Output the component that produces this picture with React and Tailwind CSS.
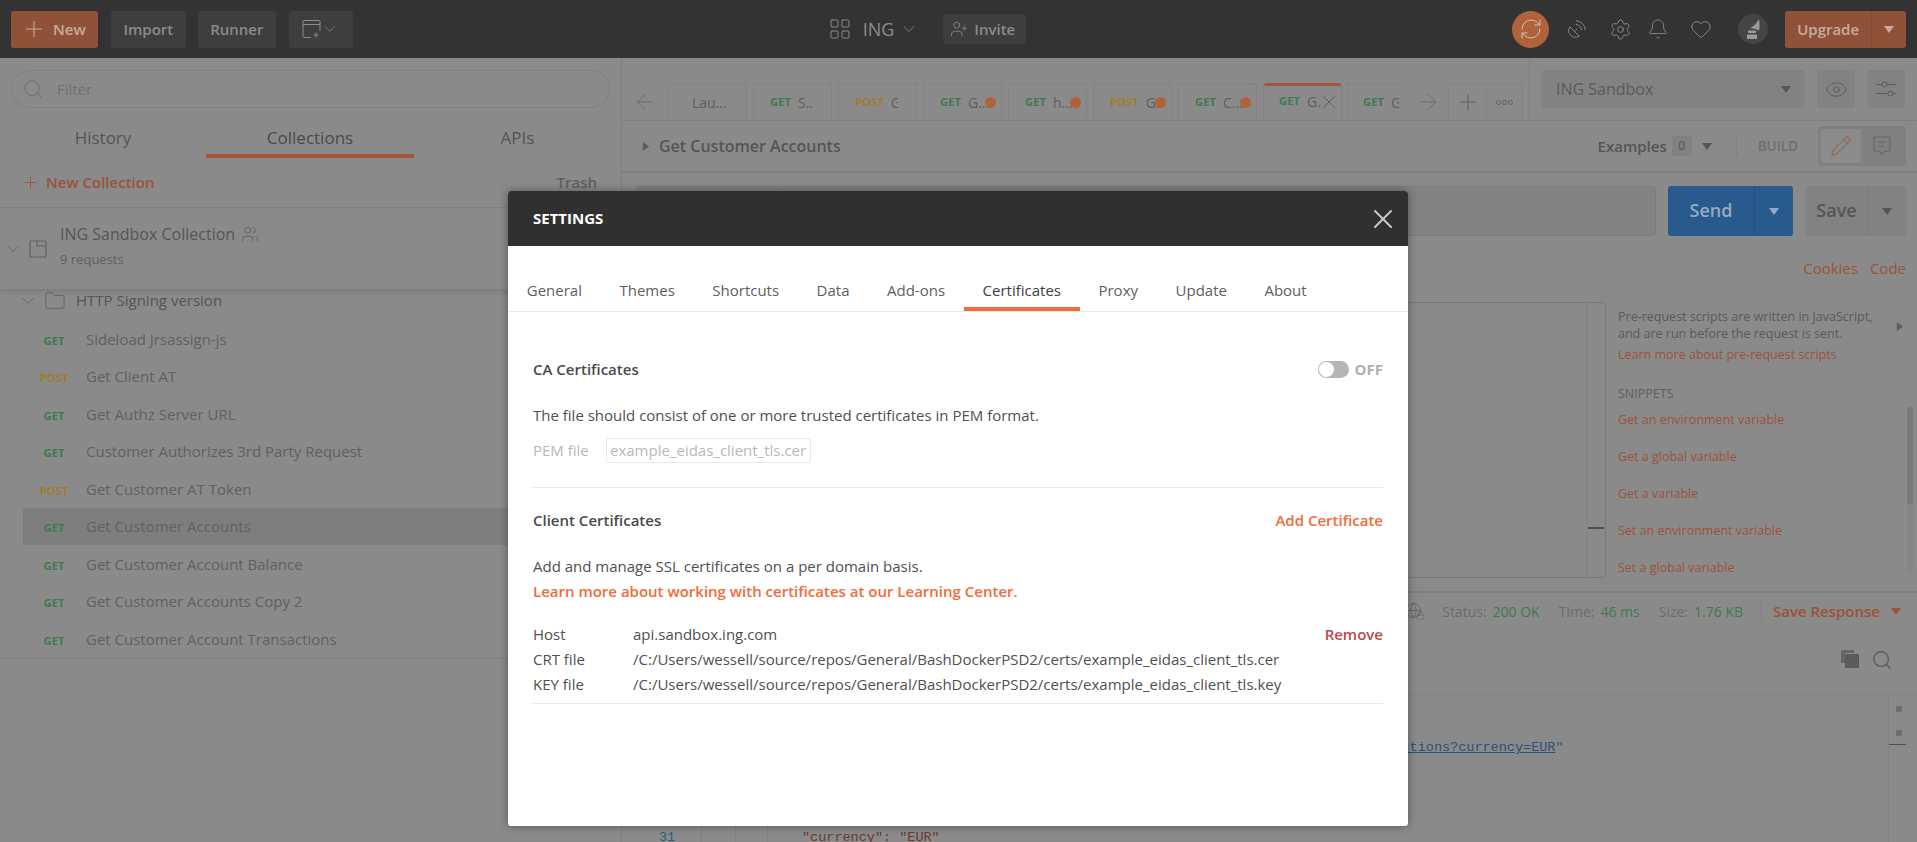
import React from "react";
import { Plus, Search, ChevronDown, LayoutGrid, UserPlus, RefreshCw, SatelliteDish, Settings, Bell, Heart, ArrowLeft, ArrowRight, X, Eye, Pencil, Users, Folder, Globe, Lock } from "lucide-react";

const Caret = ({ dir = "down", className = "" }) => (
  <svg viewBox="0 0 10 10" className={className} fill="currentColor">
    {dir === "down" ? <path d="M0 2h10L5 9z" /> : <path d="M2 0v10l7-5z" />}
  </svg>
);

const Method = ({ m, className = "" }) => (
  <span className={`font-bold text-[11.25px] ${m === "GET" ? "text-[#3f7a50]" : "text-[#a07c2c]"} ${className}`}>{m}</span>
);

const tabs = [
  { t: "Lau...", pl: "pl-[23px]" },
  { m: "GET", t: "S.." },
  { m: "POST", t: "G", clip: true },
  { m: "GET", t: "G...", dot: true },
  { m: "GET", t: "h...", dot: true },
  { m: "POST", t: "G.", dot: true },
  { m: "GET", t: "C...", dot: true },
];

const requests = [
  ["GET", "Sideload Jrsassign-js"],
  ["POST", "Get Client AT"],
  ["GET", "Get Authz Server URL"],
  ["GET", "Customer Authorizes 3rd Party Request"],
  ["POST", "Get Customer AT Token"],
  ["GET", "Get Customer Accounts", true],
  ["GET", "Get Customer Account Balance"],
  ["GET", "Get Customer Accounts Copy 2"],
  ["GET", "Get Customer Account Transactions"],
];

const settingsTabs = ["General", "Themes", "Shortcuts", "Data", "Add-ons", "Certificates", "Proxy", "Update", "About"];

function TopBar() {
  return (
    <div className="h-[58px] shrink-0 bg-[#333333] flex items-center pl-[11px] pr-[11px]">
      <div className="w-[87px] h-[37px] rounded-[3px] bg-[#8f5239] flex items-center pl-[10px] text-[#c7ab9d] text-[15px] font-semibold">
        <Plus size={26} strokeWidth={1} className="mr-[6px]" />New
      </div>
      <div className="ml-[13px] w-[75px] h-[37px] rounded-[3px] bg-[#3e3e3e] flex items-center justify-center text-[#8b8b8b] text-[15px] font-semibold">Import</div>
      <div className="ml-[12px] w-[78px] h-[37px] rounded-[3px] bg-[#3e3e3e] flex items-center justify-center text-[#8b8b8b] text-[15px] font-semibold">Runner</div>
      <div className="ml-[13px] w-[64px] h-[37px] rounded-[3px] bg-[#3e3e3e] flex items-center pl-[12px] text-[#8b8b8b]">
        <svg width="20" height="20" viewBox="0 0 20 20" fill="none" stroke="currentColor" strokeWidth="1">
          <path d="M10 18.500H3a1 1 0 0 1-1-1V2.500a1 1 0 0 1 1-1h15a1 1 0 0 1 1 1V12M2 5.500h17M15 13.500v5M12.500 16h5" />
        </svg>
        <ChevronDown size={18} strokeWidth={1} />
      </div>
      <LayoutGrid size={24} strokeWidth={1} className="ml-[475px] text-[#8b8b8b]" />
      <span className="ml-[11px] text-[18px] text-[#8b8b8b]">ING</span>
      <ChevronDown size={20} strokeWidth={1} className="ml-[5px] text-[#8b8b8b]" />
      <div className="ml-[24px] w-[83px] h-[30px] rounded-[3px] bg-[#3e3e3e] flex items-center pl-[7px] text-[#8b8b8b] text-[15px] font-semibold">
        <UserPlus size={18} strokeWidth={1.1} className="mr-[6px]" />Invite
      </div>
      <div className="ml-[486px] w-[37px] h-[37px] rounded-full bg-[#b0633a] flex items-center justify-center text-[#d4c3b8]">
        <RefreshCw size={24} strokeWidth={1} />
      </div>
      <SatelliteDish size={22} strokeWidth={1} className="ml-[17px] text-[#8b8b8b]" />
      <Settings size={23} strokeWidth={1} className="ml-[21px] text-[#8b8b8b]" />
      <Bell size={22} strokeWidth={1} className="ml-[15px] text-[#8b8b8b]" />
      <Heart size={22} strokeWidth={1} className="ml-[21px] text-[#8b8b8b]" />
      <div className="ml-[26px] w-[30px] h-[30px] rounded-full bg-[#454545] flex items-center justify-center">
        <svg width="18" height="22" viewBox="0 0 18 22" fill="#9a9a9a">
          <path d="M15 1c.6 3.500.8 8 .2 11.500-2.500-1.500-6-2.500-9-2.300C9.500 8.500 12.800 5 15 1zM4 12.500h8v2.500H4zM3 16.500h10V21H3z" />
        </svg>
      </div>
      <div className="ml-[17px] w-[121px] h-[37px] rounded-[3px] bg-[#8f5239] flex items-center text-[#c7ab9d] text-[15px] font-semibold">
        <div className="w-[87px] h-full flex items-center justify-center border-r border-[#85492f]">Upgrade</div>
        <div className="flex-1 flex justify-center"><Caret className="w-[10px] h-[10px]" /></div>
      </div>
    </div>
  );
}

function Sidebar() {
  return (
    <div className="w-[622px] shrink-0 border-r border-[#7f7f7f] flex flex-col text-[#555555]">
      <div className="mx-[11px] mt-[12px] h-[38px] rounded-full border border-[#7f7f7f] flex items-center pl-[10px] text-[#707070]">
        <Search size={22} strokeWidth={1.1} />
        <span className="ml-[13px] text-[15px]">Filter</span>
      </div>
      <div className="h-[50px] grid grid-cols-[206px_208px_207px] text-[17px] text-center">
        <div className="pt-[17px] text-[#555555]">History</div>
        <div className="pt-[17px] text-[#4a4a4a] border-b-4 border-[#a4573c]">Collections</div>
        <div className="pt-[17px] text-[#555555]">APIs</div>
      </div>
      <div className="h-[50px] border-b border-[#7f7f7f] flex items-center pl-[21px] pr-[24px] text-[15px]">
        <Plus size={19} strokeWidth={1} className="text-[#9c5339]" />
        <span className="ml-[6px] font-semibold text-[#9c5339]">New Collection</span>
        <span className="ml-auto text-[#606060] font-semibold">Trash</span>
      </div>
      <div className="h-[82px] border-b border-[#7f7f7f] flex items-center pl-[3px] pb-[6px] shadow-[0_3px_4px_rgba(0,0,0,0.08)]">
        <ChevronDown size={20} strokeWidth={1} className="text-[#5e5e5e] mt-[6px]" />
        <svg width="20" height="20" viewBox="0 0 20 20" fill="none" stroke="#606060" strokeWidth="1.1" className="ml-[5px] mt-[6px]">
          <path d="M3 2h14a1 1 0 0 1 1 1v14a1 1 0 0 1-1 1H3a1 1 0 0 1-1-1V3a1 1 0 0 1 1-1zM9 2v5h9" />
        </svg>
        <div className="ml-[12px]">
          <div className="flex items-center text-[16px] text-[#555555] leading-[22px]">
            ING Sandbox Collection
            <Users size={18} strokeWidth={1} className="ml-[6px]" />
          </div>
          <div className="text-[13px] text-[#606060] mt-[5px] leading-[18px]">9 requests</div>
        </div>
      </div>
      <div className="h-[21px] flex items-center pl-[18px] mb-[9px]">
        <ChevronDown size={20} strokeWidth={1} className="text-[#5e5e5e]" />
        <Folder size={22} strokeWidth={1} className="ml-[6px] text-[#606060]" />
        <span className="ml-[10px] text-[15px] text-[#555555]">HTTP Signing version</span>
      </div>
      <div className="border-b border-[#7f7f7f]">
        {requests.map(([m, t, sel]) => (
          <div key={t} className={`h-[37.5px] ml-[23px] flex items-center text-[15px] text-[#616161] ${sel ? "bg-[#7e7e7e]" : ""}`}>
            <div className="w-[62px] text-center shrink-0"><Method m={m} /></div>
            <span className="ml-[1px]">{t}</span>
          </div>
        ))}
      </div>
    </div>
  );
}

function RequestTabs() {
  return (
    <div className="h-[63px] shrink-0 flex border-b border-[#7f7f7f]">
      <div className="w-[908px] shrink-0 flex items-end border-r border-[#7f7f7f] h-[62px]">
        <div className="w-[46px] h-[37px] flex items-center justify-center text-[#6c6c6c]"><ArrowLeft size={26} strokeWidth={0.9} /></div>
        <div className="flex gap-[6px]">
          {tabs.map((tab, i) => (
            <div key={i} className={`relative w-[79px] h-[37px] rounded-t-[3px] border border-b-0 border-[#828282] flex items-center text-[14px] text-[#5e5e5e] whitespace-nowrap overflow-hidden ${tab.pl || "pl-[16px]"}`}>
              {tab.m && <Method m={tab.m} className="mr-[7px]" />}
              <span className={tab.clip ? "w-[7px] overflow-hidden" : ""}>{tab.t}</span>
              {tab.dot && <span className="absolute right-[5px] top-[13px] w-[11px] h-[11px] rounded-full bg-[#b0633a]" />}
            </div>
          ))}
          <div className="relative w-[79px] h-[37px] rounded-t-[3px] border-x border-[#828282] flex items-center pl-[15px] text-[14px] text-[#5e5e5e] overflow-hidden">
            <span className="absolute left-[-1px] right-[-1px] top-0 h-[3px] bg-[#a4573c] rounded-t-[3px]" />
            <Method m="GET" className="mr-[7px]" />
            <span>G.</span>
            <X size={22} strokeWidth={1} className="ml-[-3px]" />
          </div>
        </div>
        <div className="relative ml-[5px] w-[52px] h-[37px] rounded-tl-[3px] border-l border-t border-[#828282] flex items-center pl-[15px] text-[14px] text-[#5e5e5e] overflow-hidden whitespace-nowrap">
          <Method m="GET" className="mr-[7px]" />G
        </div>
        <div className="w-[49px] h-[37px] flex items-center justify-center pl-[9px] text-[#6c6c6c]"><ArrowRight size={26} strokeWidth={0.9} /></div>
        <div className="w-[39px] h-[37px] border border-b-0 border-[#828282] rounded-tl-[3px] flex items-center justify-center text-[#606060]"><Plus size={26} strokeWidth={1} /></div>
        <div className="w-[36px] h-[37px] border-t border-r border-[#828282] rounded-tr-[3px] flex items-center justify-center gap-[1px]">
          <span className="w-[5px] h-[5px] rounded-full border border-[#606060]" />
          <span className="w-[5px] h-[5px] rounded-full border border-[#606060]" />
          <span className="w-[5px] h-[5px] rounded-full border border-[#606060]" />
        </div>
      </div>
      <div className="flex-1 pl-[12px] pr-[11px] pt-[12px] flex items-start text-[#5a5a5a]">
        <div className="w-[263px] h-[38px] rounded-[3px] bg-[#828282] flex items-center pl-[14px] pr-[14px] text-[16px] font-medium">
          ING Sandbox<Caret className="ml-auto w-[10px] h-[10px] text-[#565656]" />
        </div>
        <div className="ml-[12px] w-[38px] h-[38px] rounded-[3px] bg-[#828282] flex items-center justify-center"><Eye size={23} strokeWidth={1} /></div>
        <div className="ml-[12px] w-[38px] h-[38px] rounded-[3px] bg-[#828282] flex items-center justify-center">
          <svg width="22" height="16" viewBox="0 0 22 16" fill="none" stroke="currentColor" strokeWidth="1">
            <path d="M1 3.500h6M12 3.500h9M1 12.500h12M18 12.500h3" />
            <circle cx="9.500" cy="3.500" r="2.500" />
            <circle cx="15.500" cy="12.500" r="2.500" />
          </svg>
        </div>
      </div>
    </div>
  );
}

function NameRow() {
  return (
    <div className="h-[52px] shrink-0 border-b-2 border-[#7f7f7f] flex items-center pl-[19px] pr-[11px] text-[#555555]">
      <Caret dir="right" className="w-[9px] h-[9px] text-[#5e5e5e]" />
      <span className="ml-[9px] text-[16px] font-semibold">Get Customer Accounts</span>
      <span className="ml-auto text-[15px] font-semibold">Examples</span>
      <span className="ml-[5px] w-[20px] h-[20px] rounded-[2px] bg-[#818181] flex items-center justify-center text-[12px]">0</span>
      <Caret className="ml-[10px] w-[10px] h-[10px]" />
      <span className="ml-[24px] h-[20px] border-l border-[#808080]" />
      <span className="ml-[21px] text-[13.500px] font-semibold text-[#6f6f6f]">BUILD</span>
      <div className="ml-[20px] w-[88px] h-[40px] rounded-[3px] bg-[#808080] flex items-center pl-[3px]">
        <div className="w-[40px] h-[34px] rounded-[3px] bg-[#8b8b8b] flex items-center justify-center text-[#9c5339]"><Pencil size={22} strokeWidth={1} /></div>
        <div className="ml-[1px] w-[40px] flex justify-center text-[#666666]">
          <svg width="20" height="22" viewBox="0 0 20 22" fill="none" stroke="currentColor" strokeWidth="1.1"><path d="M2 2h16v14h-5l-3 3-3-3H2zM5.500 7h9M5.500 11h6" /></svg>
        </div>
      </div>
    </div>
  );
}

function UrlRow() {
  return (
    <div className="mt-[13px] h-[50px] shrink-0 flex pl-[14px] pr-[11px] text-[18px] font-semibold">
      <div className="flex-1 rounded-[3px] border border-[#7b7b7b] bg-[#828282] flex">
        <div className="w-[143px] border-r border-[#7b7b7b]" />
      </div>
      <div className="ml-[12px] w-[125px] rounded-[3px] bg-[#285a8e] flex items-center text-[#97aac0]">
        <div className="w-[87px] h-full flex items-center justify-center border-r border-[#25517f] pb-[2px]">Send</div>
        <div className="flex-1 flex justify-center"><Caret className="w-[10px] h-[10px]" /></div>
      </div>
      <div className="ml-[13px] w-[100px] rounded-[3px] bg-[#828282] flex items-center text-[#555555]">
        <div className="w-[62px] h-full flex items-center justify-center border-r border-[#7b7b7b] pb-[2px]">Save</div>
        <div className="flex-1 flex justify-center"><Caret className="w-[10px] h-[10px]" /></div>
      </div>
    </div>
  );
}

function ScriptArea() {
  return (
    <div className="flex shrink-0 h-[292px] border-b-2 border-[#7f7f7f] text-[#5a5a5a]">
      <div className="w-[984px] mt-[1px] h-[276px] border border-[#787878] rounded-[3px] flex justify-end">
        <div className="relative w-[19px] border-l border-[#7f7f7f]">
          <span className="absolute left-[1px] top-[224px] w-[16px] h-[2px] bg-[#4f4f4f]" />
        </div>
      </div>
      <div className="relative ml-[12px] flex-1 text-[12.500px] pt-[7px]">
        <div className="leading-[17px]">Pre-request scripts are written in JavaScript,<br />and are run before the request is sent.</div>
        <div className="text-[#9c5339] mt-[4px] leading-[17px]">Learn more about pre-request scripts</div>
        <div className="mt-[22px] leading-[17px] text-[#606060]">SNIPPETS</div>
        <div className="mt-[9px] flex flex-col gap-[20px] text-[#9c5339] leading-[17px]">
          <div>Get an environment variable</div>
          <div>Get a global variable</div>
          <div>Get a variable</div>
          <div>Set an environment variable</div>
          <div>Set a global variable</div>
        </div>
        <Caret dir="right" className="absolute right-[13px] top-[21px] w-[9px] h-[9px] text-[#5e5e5e]" />
        <div className="absolute right-[4px] top-[106px] bottom-[17px] w-[6px] rounded-full bg-[#858585]">
          <div className="h-[97px] rounded-full bg-[#7a7a7a]" />
        </div>
      </div>
    </div>
  );
}

function ResponseBar() {
  return (
    <>
      <div className="h-[36px] shrink-0 flex items-center pr-[16px] text-[14px] text-[#6c6c6c]">
        <div className="relative ml-auto w-[18px] h-[18px] mr-[19px]">
          <Globe size={17} strokeWidth={1.1} className="text-[#5e5e5e]" />
          <Lock size={9} strokeWidth={1.3} className="absolute right-[-2px] bottom-0 text-[#5e5e5e]" />
        </div>
        <span>Status:</span><span className="ml-[6px] text-[#3f7a50]">200 OK</span>
        <span className="ml-[19px]">Time:</span><span className="ml-[6px] text-[#3f7a50]">46 ms</span>
        <span className="ml-[19px]">Size:</span><span className="ml-[6px] text-[#3f7a50]">1.76 KB</span>
        <span className="ml-[18px] h-[23px] border-l border-[#808080]" />
        <span className="ml-[11px] text-[15px] font-semibold text-[#9c5339]">Save Response</span>
        <Caret className="ml-[11px] w-[10px] h-[10px] text-[#9c5339]" />
      </div>
      <div className="h-[66px] shrink-0 border-b border-[#828282] flex items-start justify-end pr-[24px] pt-[20px] text-[#5a5a5a]">
        <svg width="20" height="20" viewBox="0 0 20 20" fill="currentColor"><path d="M1 1h13v3H5v10H1z" opacity="0.75" /><rect x="5" y="5" width="14" height="14" rx="1" /></svg>
        <Search size={22} strokeWidth={1.4} className="ml-[11px]" />
      </div>
    </>
  );
}

const codeLines = [
  { n: 26, link: true },
  { n: 27, text: '},' },
  { n: 28, text: '"balance": 100,' },
  { n: 29, text: '"amount": {' },
  { n: 30, text: '"value": "1.00",' },
  { n: 31, text: '"currency": "EUR"' },
];

function Code() {
  return (
    <div className="relative flex-1 min-h-0 flex pr-[11px] font-['Liberation_Mono',monospace] text-[13.500px] overflow-hidden">
      <div className="w-[80px] shrink-0 border-r border-[#7f7f7f]" />
      <div className="w-[34px] shrink-0 border-r border-[#7f7f7f]" />
      <div className="w-[32px] shrink-0 border-r border-[#7f7f7f]" />
      <div className="flex-1 min-w-0 pt-[44px] pl-[34px]">
        {codeLines.map((l) => (
          <div key={l.n} className="relative h-[18px] leading-[18px] whitespace-nowrap text-[#6b3a2e]">
            <span className="absolute left-[-160px] w-[50px] text-center text-[#2e5a73]">{l.n}</span>
            {l.link ? (
              <span className="text-[#555]">"href": "<span className="text-[#27527d] underline">https://api.sandbox.ing.com/v3/accounts/a217d676-7559-4f2a/transactions?currency=EUR</span>"</span>
            ) : (
              l.text
            )}
          </div>
        ))}
      </div>
      <div className="relative w-[18px] shrink-0 border-l border-[#7f7f7f]">
        <span className="absolute left-[7px] top-[11px] w-[6px] h-[6px] bg-[#6f6f6f]" />
        <span className="absolute left-[7px] top-[35px] w-[6px] h-[6px] bg-[#6f6f6f]" />
        <span className="absolute left-0 top-[49px] w-[17px] h-[1px] bg-[#4f4f4f]" />
      </div>
    </div>
  );
}

function Main() {
  return (
    <div className="flex-1 min-w-0 flex flex-col">
      <RequestTabs />
      <NameRow />
      <UrlRow />
      <div className="h-[65px] shrink-0 flex items-center justify-end pr-[11px] text-[15px] text-[#9c5339]">
        <span>Cookies</span><span className="ml-[12px]">Code</span>
      </div>
      <ScriptArea />
      <ResponseBar />
      <Code />
    </div>
  );
}

function SettingsModal() {
  return (
    <div className="absolute left-[508px] top-[191px] w-[900px] h-[635px] rounded-[3px] bg-white shadow-[0_0_8px_rgba(0,0,0,0.4)] overflow-hidden flex flex-col text-[15px] text-[#505050]">
      <div className="h-[55px] shrink-0 bg-[#303030] flex items-center justify-between pl-[25px] pr-[9px]">
        <span className="text-white font-bold text-[15px]">SETTINGS</span>
        <X size={32} strokeWidth={1.5} className="text-[#c8c8c8]" />
      </div>
      <div className="mt-[33px] h-[32px] shrink-0 border-b border-[#e8e8e8] box-content flex">
        {settingsTabs.map((t) => (
          <div key={t} className={`px-[18.750px] h-[32px] leading-[22px] ${t === "Certificates" ? "border-b-4 border-[#f26b3a] text-[#404040]" : "text-[#606060]"}`}>{t}</div>
        ))}
      </div>
      <div className="px-[25px] flex flex-col">
        <div className="mt-[47px] h-[20px] flex items-center justify-between">
          <span className="font-semibold text-[#4a4a4a]">CA Certificates</span>
          <div className="flex items-center">
            <div className="w-[31px] h-[17px] rounded-full bg-[#b5b5b5] flex items-center pl-[1px]"><span className="w-[15px] h-[15px] rounded-full bg-white" /></div>
            <span className="ml-[6px] font-bold text-[#b0b0b0] text-[15px]">OFF</span>
          </div>
        </div>
        <div className="mt-[26px] leading-[20px]">The file should consist of one or more trusted certificates in PEM format.</div>
        <div className="mt-[13px] flex items-center h-[25px] text-[#b8b8b8]">
          <span className="w-[73px]">PEM file</span>
          <div className="w-[205px] h-[25px] border border-[#e8e8e8] rounded-[3px] flex items-center pl-[3px] overflow-hidden whitespace-nowrap">example_eidas_client_tls.cer</div>
        </div>
        <div className="mt-[24px] border-t border-[#e8e8e8]" />
        <div className="mt-[22px] h-[20px] flex items-center justify-between">
          <span className="font-semibold text-[#4a4a4a]">Client Certificates</span>
          <span className="font-semibold text-[#f26b3a]">Add Certificate</span>
        </div>
        <div className="mt-[26px] leading-[20px]">Add and manage SSL certificates on a per domain basis.</div>
        <div className="mt-[5px] leading-[20px] font-semibold text-[#f26b3a]">Learn more about working with certificates at our Learning Center.</div>
        <div className="mt-[23px] flex flex-col gap-[5px] leading-[20px]">
          <div className="flex justify-between">
            <div className="flex"><span className="w-[100px]">Host</span><span>api.sandbox.ing.com</span></div>
            <span className="font-semibold text-[#b94a48]">Remove</span>
          </div>
          <div className="flex"><span className="w-[100px]">CRT file</span><span>/C:/Users/wessell/source/repos/General/BashDockerPSD2/certs/example_eidas_client_tls.cer</span></div>
          <div className="flex"><span className="w-[100px]">KEY file</span><span>/C:/Users/wessell/source/repos/General/BashDockerPSD2/certs/example_eidas_client_tls.key</span></div>
        </div>
        <div className="mt-[9px] border-t border-[#e8e8e8]" />
      </div>
    </div>
  );
}

export default function App() {
  return (
    <div className="relative h-[842px] w-[1917px] overflow-hidden bg-[#8a8a8a] flex flex-col font-['Open_Sans',sans-serif]">
      <TopBar />
      <div className="flex-1 min-h-0 flex">
        <Sidebar />
        <Main />
      </div>
      <SettingsModal />
    </div>
  );
}
